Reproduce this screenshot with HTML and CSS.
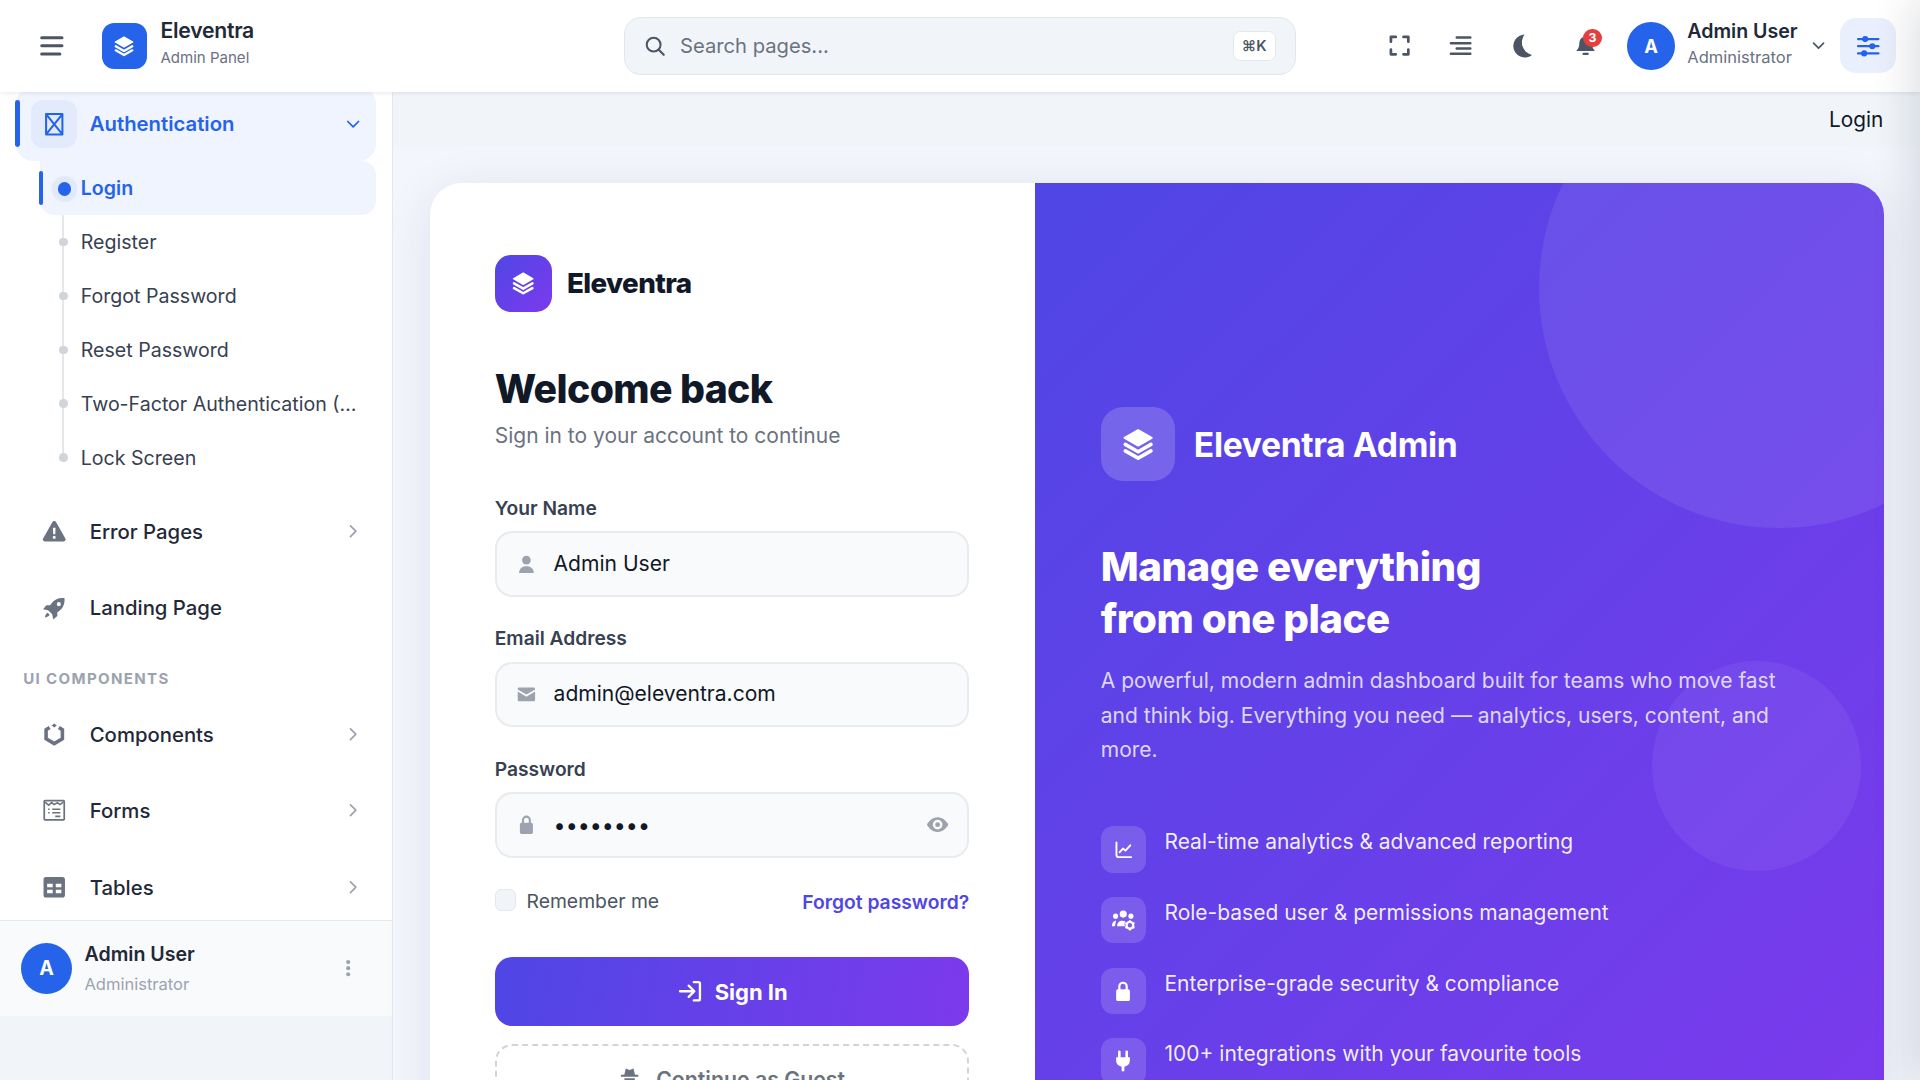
FILE: index.html
```html
<!DOCTYPE html>
<html lang="en">
<head>
<meta charset="utf-8">
<title>Eleventra Admin - Login</title>
<link rel="stylesheet" href="styles.css">
</head>
<body>
<svg class="defs" aria-hidden="true">
  <symbol id="i-layers" viewBox="0 0 24 24"><path d="M12 2.200 21.500 7.600 12 13 2.500 7.600Z" fill="currentColor" stroke="currentColor" stroke-width="1.400" stroke-linejoin="round"/><path d="M3 12.200l9 5.100 9-5.100M3 16.700l9 5.100 9-5.100" fill="none" stroke="currentColor" stroke-width="2.500" stroke-linecap="round" stroke-linejoin="round"/></symbol>
  <symbol id="i-bars" viewBox="0 0 24 24"><path d="M2.500 4.500h19M2.500 12h19M2.500 19.500h17" fill="none" stroke="currentColor" stroke-width="2.800" stroke-linecap="round"/></symbol>
  <symbol id="i-search" viewBox="0 0 24 24"><circle cx="10.500" cy="10.500" r="7.500" fill="none" stroke="currentColor" stroke-width="2.200"/><path d="m16 16 5.500 5.500" stroke="currentColor" stroke-width="2.400" stroke-linecap="round"/></symbol>
  <symbol id="i-full" viewBox="0 0 24 24"><path d="M3 8V3h5M16 3h5v5M21 16v5h-5M8 21H3v-5" fill="none" stroke="currentColor" stroke-width="2.800" stroke-linecap="round" stroke-linejoin="round"/></symbol>
  <symbol id="i-align" viewBox="0 0 24 24"><path d="M8 3.500h14M2 9.500h20M8 15h14M2 20.500h20" fill="none" stroke="currentColor" stroke-width="2.600" stroke-linecap="round"/></symbol>
  <symbol id="i-moon" viewBox="0 0 24 24"><path d="M14.500 1.500A10.700 10.700 0 1 0 21.500 20.500 12 12 0 0 1 14.500 1.500Z" fill="currentColor"/></symbol>
  <symbol id="i-bell" viewBox="0 0 24 24"><path d="M12 2.500A6.500 6.500 0 0 0 5.500 9c0 5.500-2 6.500-3 8.500h19c-1-2-3-3-3-8.500A6.500 6.500 0 0 0 12 2.500Z" fill="currentColor"/><path d="M9.800 20.500h4.400" stroke="currentColor" stroke-width="2.200" stroke-linecap="round"/></symbol>
  <symbol id="i-chev-d" viewBox="0 0 24 24"><path d="m5 8.500 7 7 7-7" fill="none" stroke="currentColor" stroke-width="2.300" stroke-linecap="round" stroke-linejoin="round"/></symbol>
  <symbol id="i-chev-r" viewBox="0 0 24 24"><path d="m8.500 5 7 7-7 7" fill="none" stroke="currentColor" stroke-width="2.300" stroke-linecap="round" stroke-linejoin="round"/></symbol>
  <symbol id="i-sliders" viewBox="0 0 24 24"><path d="M2 5h20M2 12h20M2 19h20" stroke="currentColor" stroke-width="2.200" stroke-linecap="round"/><circle cx="9" cy="5" r="3" fill="currentColor"/><circle cx="16" cy="12" r="3" fill="currentColor"/><circle cx="8" cy="19" r="3" fill="currentColor"/></symbol>
  <symbol id="i-auth" viewBox="0 0 24 24"><path d="M4 2h16v20H4ZM4 2l16 20M20 2 4 22" fill="none" stroke="currentColor" stroke-width="2" stroke-linejoin="round"/></symbol>
  <symbol id="i-warn" viewBox="0 0 24 24"><path fill-rule="evenodd" d="M12 2c.8 0 1.500.4 1.900 1.100l9 16c.8 1.400-.2 2.900-1.900 2.900H3c-1.700 0-2.700-1.500-1.900-2.900l9-16C10.500 2.400 11.200 2 12 2Zm-1.300 6.500.3 6.500h2l.3-6.500Zm1.300 8a1.500 1.500 0 1 0 0 3 1.500 1.500 0 0 0 0-3Z" fill="currentColor"/></symbol>
  <symbol id="i-rocket" viewBox="0 0 24 24"><path fill-rule="evenodd" d="M22 2c-5.500-.6-10 1.200-13 5.500L8 9H4.300L1 13l5 1 4 4 1 5 4-3.300V16l1.500-1C20.800 12 22.600 7.500 22 2Zm-5.500 4a2 2 0 1 1 0 4 2 2 0 0 1 0-4ZM5.500 16.500C3.500 17.500 3 20 3 21c1 0 3.500-.5 4.500-2.500Z" fill="currentColor"/></symbol>
  <symbol id="i-cube" viewBox="0 0 24 24"><path d="M7.500 5.500 4 7.700v8.800l8 4.700 8-4.700V7.700l-3.500-2.200" fill="none" stroke="currentColor" stroke-width="3.500"/><path d="m12 1.500 2.500 2-2.500 2-2.500-2Z" fill="currentColor"/></symbol>
  <symbol id="i-form" viewBox="0 0 24 24"><path d="M3 2.500h18a.8.8 0 0 1 .8.800v17.400a.8.8 0 0 1-.8.800H3a.8.8 0 0 1-.8-.800V3.300a.8.8 0 0 1 .8-.800Z" fill="none" stroke="currentColor" stroke-width="1.700"/><path d="m3 4 3.500 3 3-2.500 2.500 2 3-2 2.500 2 3.500-2.500M6 11h1.500M10 11h8M6 14.500h1.500M10 14.500h8M13 18h5" fill="none" stroke="currentColor" stroke-width="1.500"/></symbol>
  <symbol id="i-table" viewBox="0 0 24 24"><path fill-rule="evenodd" d="M4 2h16a2.500 2.500 0 0 1 2.500 2.500v15A2.500 2.500 0 0 1 20 22H4a2.500 2.500 0 0 1-2.500-2.500v-15A2.500 2.500 0 0 1 4 2Zm1 6.500V12h5.500V8.500Zm8.500 0V12H19V8.500ZM5 14.500V18h5.500v-3.500Zm8.500 0V18H19v-3.500Z" fill="currentColor"/></symbol>
  <symbol id="i-user" viewBox="0 0 24 24"><circle cx="12" cy="7" r="5" fill="currentColor"/><path d="M3.500 22c0-5 3.500-8 8.500-8s8.500 3 8.500 8Z" fill="currentColor"/></symbol>
  <symbol id="i-mail" viewBox="0 0 24 24"><path d="M2 5.500A1.500 1.500 0 0 1 3.500 4h17A1.500 1.500 0 0 1 22 5.500v.7l-10 6-10-6Z" fill="currentColor"/><path d="M2 8.700v9.800A1.500 1.500 0 0 0 3.500 20h17a1.500 1.500 0 0 0 1.500-1.500V8.700l-10 6Z" fill="currentColor"/></symbol>
  <symbol id="i-lock" viewBox="0 0 24 24"><path d="M8 11V7a4 4 0 0 1 8 0v4" fill="none" stroke="currentColor" stroke-width="2.400"/><rect x="4.500" y="10" width="15" height="13" rx="2" fill="currentColor"/></symbol>
  <symbol id="i-eye" viewBox="0 0 24 24"><path fill-rule="evenodd" d="M12 4.500c5.500 0 9.500 4.500 11 7.500-1.500 3-5.500 7.500-11 7.500S2.500 15 1 12c1.500-3 5.500-7.500 11-7.500Zm0 2.500a5 5 0 1 0 0 10 5 5 0 0 0 0-10Zm0 2.500a2.500 2.500 0 1 1 0 5 2.500 2.500 0 0 1 0-5Z" fill="currentColor"/></symbol>
  <symbol id="i-login" viewBox="0 0 24 24"><path d="M2 12h13M10.500 6.500 16 12l-5.500 5.500M15.500 3H20a1.500 1.500 0 0 1 1.500 1.500v15A1.500 1.500 0 0 1 20 21h-4.500" fill="none" stroke="currentColor" stroke-width="2.300" stroke-linecap="round" stroke-linejoin="round"/></symbol>
  <symbol id="i-guest" viewBox="0 0 24 24"><path d="M8 1.500 12 3l4-1.500 1.500 6.500H21v2H3V8h3.500Z" fill="currentColor"/><path fill-rule="evenodd" d="M6.500 11.500h11A5.500 5.500 0 0 1 6.500 11.500ZM4 22c0-3.500 2.500-6 5-6l3 2 3-2c2.500 0 5 2.500 5 6Z" fill="currentColor"/></symbol>
  <symbol id="i-chart" viewBox="0 0 24 24"><path d="M3 3v15.500A2.500 2.500 0 0 0 5.500 21H21M7 15l4-4.500 3 2.500 6-6.500" fill="none" stroke="currentColor" stroke-width="2.300" stroke-linecap="round" stroke-linejoin="round"/></symbol>
  <symbol id="i-team" viewBox="0 0 24 24"><circle cx="12" cy="6" r="3.500" fill="currentColor"/><circle cx="4.500" cy="8" r="2.500" fill="currentColor"/><circle cx="19.500" cy="8" r="2.500" fill="currentColor"/><path d="M1 18c0-3 1-5.500 4-5.500L3.800 18ZM6 18c0-3.500 2-5.500 5.500-5.500 1 0 2 .2 2.500.6-.9 1.500-1 3.300-.2 4.900Z" fill="currentColor"/><circle cx="18.500" cy="17" r="3.300" fill="none" stroke="currentColor" stroke-width="2.200"/><path d="M18.500 12v2M18.500 20v2M14 14.500l1.700 1M21.300 18.500l1.700 1M14 19.500l1.700-1M21.300 15.500l1.700-1" stroke="currentColor" stroke-width="1.800"/></symbol>
  <symbol id="i-plug" viewBox="0 0 24 24"><path d="M8 2v6M16 2v6" stroke="currentColor" stroke-width="2.800" stroke-linecap="round"/><path d="M4.500 8h15v3a7.500 7.500 0 0 1-6 7.300V22a1.500 1.500 0 0 1-3 0v-3.700a7.500 7.500 0 0 1-6-7.300Z" fill="currentColor"/></symbol>
  <symbol id="i-dots" viewBox="0 0 24 24"><circle cx="12" cy="4" r="2.700" fill="currentColor"/><circle cx="12" cy="12" r="2.700" fill="currentColor"/><circle cx="12" cy="20" r="2.700" fill="currentColor"/></symbol>
</svg>

<div class="app">
  <header class="topbar">
    <div class="topbar-left">
      <button class="bars-btn"><svg class="ic-21"><use href="#i-bars"/></svg></button>
      <div class="brand-mark"><svg class="ic-18"><use href="#i-layers"/></svg></div>
      <div class="brand-text">
        <div class="brand-name">Eleventra</div>
        <div class="brand-sub">Admin Panel</div>
      </div>
    </div>
    <div class="search">
      <svg class="search-ic"><use href="#i-search"/></svg>
      <span class="search-text">Search pages...</span>
      <span class="kbd">⌘K</span>
    </div>
    <div class="topbar-right">
      <span class="tb-icon"><svg class="ic-19"><use href="#i-full"/></svg></span>
      <span class="tb-icon"><svg class="ic-19"><use href="#i-align"/></svg></span>
      <span class="tb-icon"><svg class="ic-21"><use href="#i-moon"/></svg></span>
      <span class="tb-icon bell"><svg class="ic-19"><use href="#i-bell"/></svg><span class="badge">3</span></span>
      <div class="tb-user">
        <div class="avatar av-top">A</div>
        <div class="tb-user-text">
          <div class="tb-user-name">Admin User</div>
          <div class="tb-user-role">Administrator</div>
        </div>
        <svg class="tb-chev"><use href="#i-chev-d"/></svg>
      </div>
      <div class="settings-btn"><svg class="ic-20"><use href="#i-sliders"/></svg></div>
    </div>
  </header>

  <div class="layout">
    <div class="side-col">
      <aside class="sidebar">
        <nav class="nav">
          <div class="nav-item open">
            <span class="open-bar"></span>
            <span class="nav-ic boxed"><svg class="ic-20"><use href="#i-auth"/></svg></span>
            <span class="nav-label">Authentication</span>
            <svg class="nav-chev"><use href="#i-chev-d"/></svg>
          </div>
          <ul class="sub">
            <li class="sub-item active"><span class="sub-bar"></span><span class="dot"></span><span class="sub-label">Login</span></li>
            <li class="sub-item"><span class="dot"></span><span class="sub-label">Register</span></li>
            <li class="sub-item"><span class="dot"></span><span class="sub-label">Forgot Password</span></li>
            <li class="sub-item"><span class="dot"></span><span class="sub-label">Reset Password</span></li>
            <li class="sub-item"><span class="dot"></span><span class="sub-label">Two-Factor Authentication (2FA)</span></li>
            <li class="sub-item"><span class="dot"></span><span class="sub-label">Lock Screen</span></li>
          </ul>
          <div class="nav-item first-after"><span class="nav-ic"><svg class="ic-20"><use href="#i-warn"/></svg></span><span class="nav-label">Error Pages</span><svg class="nav-chev"><use href="#i-chev-r"/></svg></div>
          <div class="nav-item"><span class="nav-ic"><svg class="ic-20"><use href="#i-rocket"/></svg></span><span class="nav-label">Landing Page</span></div>
          <div class="nav-section">UI COMPONENTS</div>
          <div class="nav-item"><span class="nav-ic"><svg class="ic-20"><use href="#i-cube"/></svg></span><span class="nav-label">Components</span><svg class="nav-chev"><use href="#i-chev-r"/></svg></div>
          <div class="nav-item"><span class="nav-ic"><svg class="ic-20"><use href="#i-form"/></svg></span><span class="nav-label">Forms</span><svg class="nav-chev"><use href="#i-chev-r"/></svg></div>
          <div class="nav-item"><span class="nav-ic"><svg class="ic-20"><use href="#i-table"/></svg></span><span class="nav-label">Tables</span><svg class="nav-chev"><use href="#i-chev-r"/></svg></div>
        </nav>
        <div class="side-user">
          <div class="avatar av-side">A</div>
          <div class="side-user-text">
            <div class="side-user-name">Admin User</div>
            <div class="side-user-role">Administrator</div>
          </div>
          <svg class="side-dots"><use href="#i-dots"/></svg>
        </div>
      </aside>
    </div>

    <main class="main">
      <div class="crumbs">Login</div>
      <div class="content">
        <section class="card">
          <div class="pane-form">
            <div class="form-brand">
              <div class="form-mark"><svg class="ic-20"><use href="#i-layers"/></svg></div>
              <span class="form-brand-name">Eleventra</span>
            </div>
            <h1 class="title">Welcome back</h1>
            <p class="subtitle">Sign in to your account to continue</p>

            <div class="field">
              <div class="field-label">Your Name</div>
              <div class="input"><svg class="in-ic"><use href="#i-user"/></svg><span class="in-text">Admin User</span></div>
            </div>
            <div class="field">
              <div class="field-label">Email Address</div>
              <div class="input"><svg class="in-ic"><use href="#i-mail"/></svg><span class="in-text">admin@eleventra.com</span></div>
            </div>
            <div class="field">
              <div class="field-label">Password</div>
              <div class="input"><svg class="in-ic"><use href="#i-lock"/></svg><span class="in-dots">••••••••</span><svg class="in-eye"><use href="#i-eye"/></svg></div>
            </div>
            <div class="row-options">
              <label class="remember"><span class="check"></span><span>Remember me</span></label>
              <a class="forgot">Forgot password?</a>
            </div>
            <button class="btn-primary"><svg class="ic-20"><use href="#i-login"/></svg><span>Sign In</span></button>
            <button class="btn-guest"><svg class="ic-19"><use href="#i-guest"/></svg><span>Continue as Guest</span></button>
          </div>

          <div class="pane-promo">
            <span class="blob blob-a"></span>
            <span class="blob blob-b"></span>
            <div class="promo-brand">
              <div class="promo-mark"><svg class="ic-28"><use href="#i-layers"/></svg></div>
              <span class="promo-name">Eleventra Admin</span>
            </div>
            <h2 class="promo-title">Manage everything<br>from one place</h2>
            <p class="promo-text">A powerful, modern admin dashboard built for teams who move fast and think big. Everything you need — analytics, users, content, and more.</p>
            <ul class="features">
              <li class="feature"><span class="f-ic"><svg class="ic-16"><use href="#i-chart"/></svg></span><span>Real-time analytics &amp; advanced reporting</span></li>
              <li class="feature"><span class="f-ic"><svg class="ic-20"><use href="#i-team"/></svg></span><span>Role-based user &amp; permissions management</span></li>
              <li class="feature"><span class="f-ic"><svg class="ic-18"><use href="#i-lock"/></svg></span><span>Enterprise-grade security &amp; compliance</span></li>
              <li class="feature"><span class="f-ic"><svg class="ic-18"><use href="#i-plug"/></svg></span><span>100+ integrations with your favourite tools</span></li>
            </ul>
          </div>
        </section>
      </div>
    </main>
  </div>
  <div class="offcanvas"></div>
</div>
</body>
</html>
```
FILE: styles.css
```css
* { box-sizing: border-box; }
html, body { margin: 0; padding: 0; height: 100%; overflow: hidden; background: #f1f5f9; }
body { font-family: "Inter", "Liberation Sans", sans-serif; color: #111827; }
.defs { width: 0; height: 0; position: absolute; }
ul { list-style: none; margin: 0; padding: 0; }
button { font-family: inherit; border: 0; background: none; padding: 0; }
h1, h2, p { margin: 0; }

.app { zoom: 1.2245; width: 1568px; height: 882px; position: relative; overflow: hidden; display: flex; flex-direction: column; }

.ic-16 { width: 16px; height: 16px; }
.ic-17 { width: 17px; height: 17px; }
.ic-18 { width: 18px; height: 18px; }
.ic-19 { width: 19px; height: 19px; }
.ic-20 { width: 20px; height: 20px; }
.ic-21 { width: 21px; height: 21px; }
.ic-28 { width: 28px; height: 28px; }

/* top bar */
.topbar { height: 75px; flex: none; background: #fff; display: flex; align-items: center; justify-content: space-between; padding: 0 20px; box-shadow: 0 1px 4px rgba(15, 23, 42, .12); position: relative; z-index: 3; }
.topbar-left, .topbar-right { flex: 1; display: flex; align-items: center; }
.topbar-right { justify-content: flex-end; }
.bars-btn { color: #4b5563; width: 21px; display: flex; margin-left: 12px; margin-right: 30px; }
.brand-mark { width: 37px; height: 37px; border-radius: 10px; background: #2563eb; color: #fff; display: flex; align-items: center; justify-content: center; margin-right: 11px; }
.brand-text { margin-bottom: 5px; }
.brand-name { font-size: 17.300px; font-weight: 600; color: #1f2937; line-height: 22px; letter-spacing: -.2px; }
.brand-sub { font-size: 12.300px; color: #6b7280; line-height: 17px; margin-top: 4px; }

.search { width: 549px; height: 47px; flex: none; background: #f1f5f9; border: 1px solid #e2e5ea; border-radius: 14px; display: flex; align-items: center; padding: 0 16px; }
.search-ic { width: 18px; height: 18px; color: #4b5563; margin-right: 11px; }
.search-text { font-size: 16.500px; color: #6b7280; flex: 1; }
.kbd { width: 35px; height: 24px; background: #fff; border: 1px solid #e5e7eb; border-radius: 6px; font-size: 12px; font-weight: 600; color: #4b5563; display: flex; align-items: center; justify-content: center; }

.tb-icon { width: 50px; height: 40px; color: #4b5563; display: flex; align-items: center; justify-content: center; position: relative; }
.tb-icon.bell { margin-left: 2px; }
.badge { position: absolute; top: 6px; left: 23px; width: 15px; height: 15px; border-radius: 50%; background: #e53e3e; color: #fff; font-size: 10px; font-weight: 700; display: flex; align-items: center; justify-content: center; }
.tb-user { display: flex; align-items: center; margin-left: 9px; }
.avatar { background: #2563eb; color: #fff; border-radius: 50%; font-weight: 700; display: flex; align-items: center; justify-content: center; flex: none; }
.av-top { width: 39px; height: 39px; font-size: 15px; }
.tb-user-text { margin-left: 10px; margin-bottom: 4px; }
.tb-user-name { font-size: 16px; font-weight: 600; color: #1f2937; line-height: 20px; }
.tb-user-role { font-size: 13.500px; color: #6b7280; line-height: 18px; margin-top: 2px; }
.tb-chev { width: 14px; height: 14px; color: #4b5563; margin-left: 10px; }
.settings-btn { width: 45px; height: 45px; border-radius: 13px; background: #e9effc; color: #2563eb; display: flex; align-items: center; justify-content: center; margin-left: 11px; }

/* layout */
.layout { flex: 1; display: flex; min-height: 0; }
.side-col { width: 321px; flex: none; background: #f1f5f9; border-right: 1px solid #e5e7eb; }
.sidebar { height: 755px; background: #fff; display: flex; flex-direction: column; }
.nav { height: 676px; overflow: hidden; padding: 0 13px; flex: none; }

.nav-item { height: 60px; display: flex; align-items: center; padding: 0 12px; margin-bottom: 2.500px; border-radius: 14px; position: relative; color: #1f2937; }
.nav-item.open { height: 60.500px; margin-top: -4px; margin-bottom: 0; background: #eff4fe; color: #2563eb; }
.nav-item.first-after { margin-top: 8.300px; }
.open-bar { position: absolute; left: -1px; top: 11px; width: 4px; height: 38px; border-radius: 2px; background: #2563eb; }
.nav-ic { width: 38px; height: 39px; flex: none; border-radius: 10px; display: flex; align-items: center; justify-content: center; color: #6b7280; margin-right: 10.300px; }
.nav-ic.boxed { background: #e2eafc; color: #2563eb; }
.nav-label { font-size: 16.600px; font-weight: 500; flex: 1; }
.nav-item.open .nav-label { font-weight: 600; }
.nav-chev { width: 15px; height: 15px; color: #9ca3af; margin-right: -1px; }
.nav-item.open .nav-chev { color: #2563eb; }

.sub { margin: .2px 0 0 20px; position: relative; }
.sub::before { content: ""; position: absolute; left: 18px; top: 8px; bottom: 22px; width: 1.500px; background: #e5e7eb; }
.sub-item { height: 44px; display: flex; align-items: center; position: relative; padding: 0 14px 0 33px; border-radius: 0 12px 12px 12px; font-size: 16px; color: #374151; }
.sub-label { white-space: nowrap; overflow: hidden; text-overflow: ellipsis; }
.sub-item.active { background: #eff4fe; color: #2563eb; font-weight: 600; }
.sub-bar { position: absolute; left: -1px; top: 8px; width: 3.500px; height: 28px; background: #2563eb; border-radius: 2px; }
.dot { position: absolute; left: 15.500px; top: 18.500px; width: 7px; height: 7px; border-radius: 50%; background: #d1d5db; }
.sub-item.active .dot { left: 14px; top: 17px; width: 11px; height: 11px; background: #2563eb; box-shadow: 0 0 0 5px rgba(37, 99, 235, .07); }

.nav-section { height: 40.500px; padding: 18px 0 0 6px; font-size: 12.300px; font-weight: 700; letter-spacing: 1.100px; color: #9ca3af; line-height: 14px; }

.side-user { height: 79px; flex: none; background: #f9fafc; border-top: 1px solid #e5e7eb; display: flex; align-items: center; padding: 0 17px; }
.av-side { width: 42px; height: 42px; font-size: 16px; }
.side-user-text { margin-left: 10px; flex: 1; }
.side-user-name { font-size: 16px; font-weight: 600; color: #1f2937; line-height: 20px; }
.side-user-role { font-size: 13.500px; color: #9ca3af; line-height: 18px; margin-top: 5px; }
.side-dots { width: 15px; height: 15px; color: #9ca3af; margin-right: 11px; }

/* main */
.main { flex: 1; min-width: 0; background: #f4f6fd; }
.crumbs { height: 45px; background: #f1f5f9; display: flex; align-items: center; justify-content: flex-end; padding: 0 30px 0 0; font-size: 17px; color: #111827; }
.content { padding: 29.500px 29.500px 0 30px; }
.card { display: flex; height: 800px; border-radius: 26px; overflow: hidden; background: #fff; box-shadow: 0 8px 40px rgba(30, 41, 90, .1); }

.pane-form { width: 494px; flex: none; padding: 58.500px 54px 0 53px; }
.form-brand { display: flex; align-items: center; height: 47px; }
.form-mark { width: 47px; height: 47px; border-radius: 13px; background: linear-gradient(135deg, #4f46e5, #7c3aed); color: #fff; display: flex; align-items: center; justify-content: center; margin-right: 12px; }
.form-brand-name { font-size: 22.700px; font-weight: 800; color: #111827; letter-spacing: -.5px; }
.title { font-size: 32px; font-weight: 800; line-height: 40px; color: #111827; letter-spacing: -.5px; margin-top: 43px; }
.subtitle { font-size: 17.150px; color: #6b7280; line-height: 24px; margin-top: 6px; }

.field { margin-bottom: 24px; }
.subtitle + .field { margin-top: 37px; }
.field-label { font-size: 15.700px; font-weight: 600; line-height: 20px; margin-bottom: 9px; color: #374151; }
.input { height: 53.500px; border: 2px solid #e9ebee; border-radius: 14px; background: #f9fafb; display: flex; align-items: center; padding: 0 14px 1px 16px; }
.in-ic { width: 17px; height: 17px; color: #9ca3af; flex: none; margin-right: 13.500px; margin-top: 1px; }
.in-text { font-size: 17.200px; color: #111827; }
.in-dots { font-size: 17.500px; color: #111827; flex: 1; margin-top: 1px; }
.in-eye { width: 19px; height: 19px; color: #9ca3af; margin-top: 1px; }

.row-options { display: flex; align-items: center; justify-content: space-between; height: 24px; }
.remember { display: flex; align-items: center; font-size: 15.800px; color: #4b5563; margin-top: -1px; }
.check { width: 17px; height: 18px; border: 1px solid #e5e7eb; border-radius: 5px; background: #f1f5f9; margin-right: 9px; margin-top: -1px; }
.forgot { font-size: 15.750px; font-weight: 600; color: #4f46e5; margin: 1px -.5px 0 0; }
.btn-primary { display: flex; width: 100%; height: 56px; margin-top: 33.500px; border-radius: 14px; align-items: center; justify-content: center; gap: 10px; background: linear-gradient(100deg, #4f46e5, #7c3aed); color: #fff; font-size: 18px; font-weight: 700; padding-left: 2px; }
.btn-guest { display: flex; width: 100%; height: 54px; margin-top: 15px; padding-top: 2px; border-radius: 14px; align-items: center; justify-content: center; gap: 12px; border: 2px dashed #d1d5db; color: #6b7280; font-size: 17.400px; font-weight: 600; }

.pane-promo { flex: 1; position: relative; overflow: hidden; padding: 182.500px 54px 0; color: #fff; background: linear-gradient(135deg, #4f46e5, #7c3aed); }
.blob { position: absolute; border-radius: 50%; background: rgba(255, 255, 255, .08); }
.blob-a { width: 392px; height: 392px; left: 412px; top: -110.500px; }
.blob-b { width: 171px; height: 171px; left: 504px; top: 390.500px; background: rgba(255, 255, 255, .06); }
.promo-brand { display: flex; align-items: center; position: relative; }
.promo-mark { width: 61px; height: 61px; border-radius: 18px; background: rgba(255, 255, 255, .18); display: flex; align-items: center; justify-content: center; margin-right: 15px; }
.promo-name { font-size: 27.500px; font-weight: 700; letter-spacing: -.3px; padding-top: 1px; }
.promo-title { font-size: 32.900px; line-height: 43px; font-weight: 800; margin-top: 48.500px; letter-spacing: -.4px; position: relative; }
.promo-text { font-size: 17.150px; line-height: 28.500px; color: rgba(255, 255, 255, .8); margin-top: 14.500px; position: relative; }
.features { margin-top: 47.500px; position: relative; display: flex; flex-direction: column; gap: 20px; }
.feature { display: flex; align-items: flex-start; gap: 15px; font-size: 17.150px; line-height: 26px; color: rgba(255, 255, 255, .92); }
.f-ic { width: 37px; height: 37.700px; flex: none; border-radius: 10px; background: rgba(255, 255, 255, .15); display: flex; align-items: center; justify-content: center; color: #fff; }

.offcanvas { position: absolute; left: 100%; top: 0; width: 300px; height: 100%; background: #fff; box-shadow: -6px 0 34px rgba(15, 23, 42, .14); z-index: 5; }
```
